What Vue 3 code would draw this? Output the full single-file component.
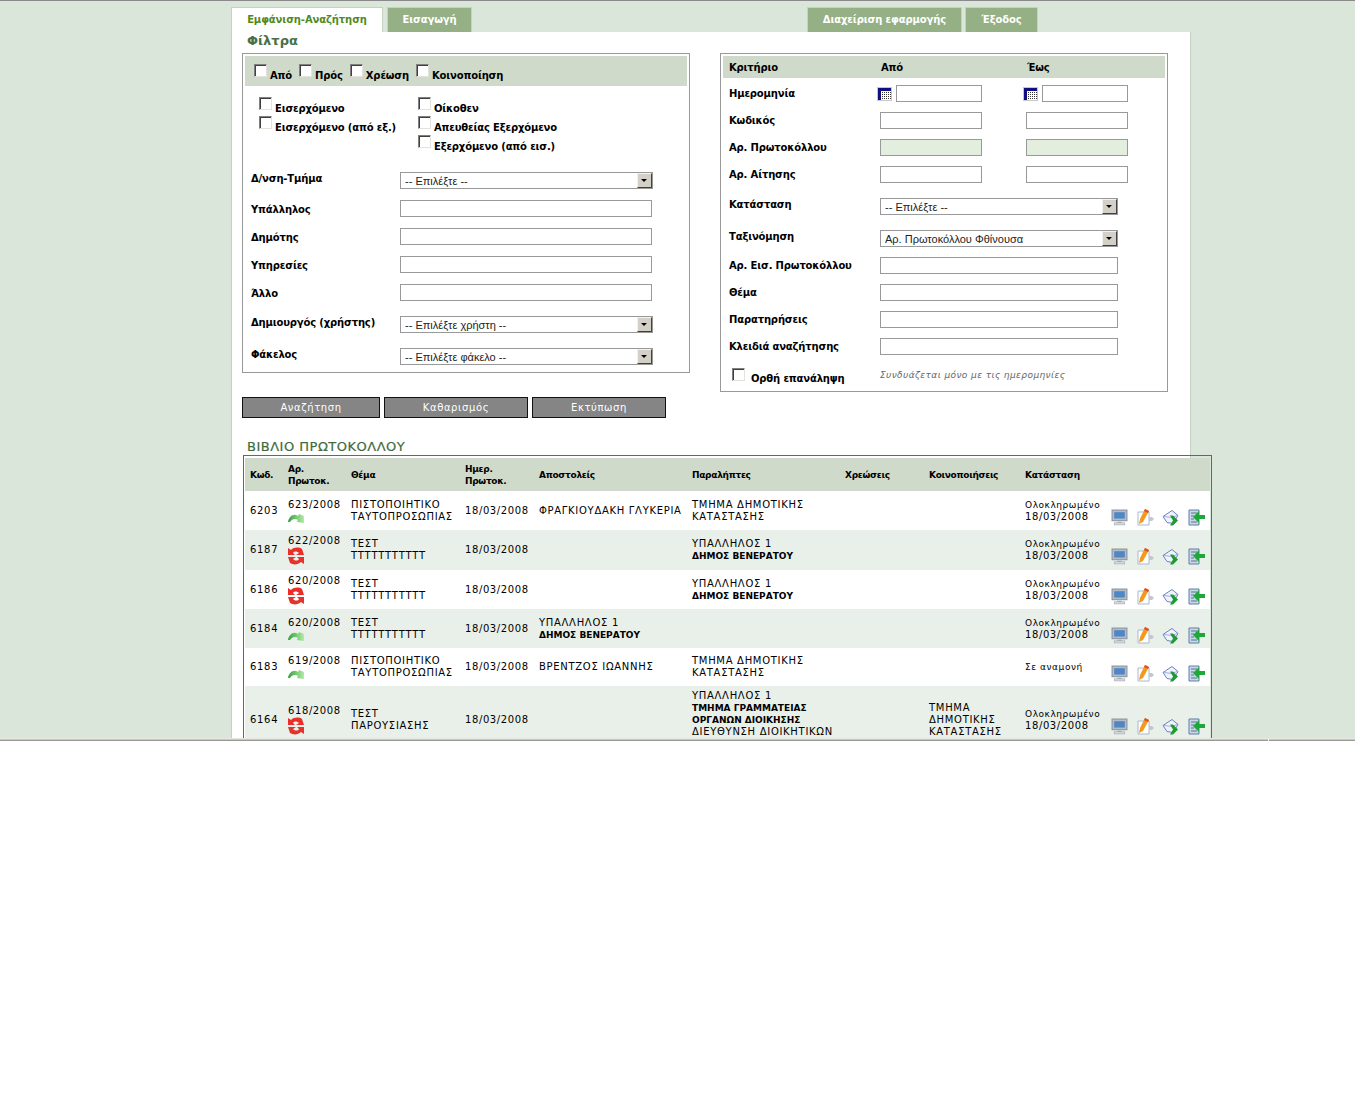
<template>
  <div class="frame">
    <svg class="defs" width="0" height="0" aria-hidden="true">
      <defs>
        <linearGradient id="grn" x1="0" y1="0" x2="1" y2="0">
          <stop offset="0" stop-color="#34a040" />
          <stop offset="1" stop-color="#b4ecA6" />
        </linearGradient>
        <symbol id="i-ok" viewBox="0 0 16 10">
          <path d="M0 9 C1 3 6 0 10 3 L11 1 L16 3 L16 10 L9 9 L10 7 C7 5 4 6 2 9 Z" fill="url(#grn)" />
        </symbol>
        <symbol id="i-sync" viewBox="0 0 16 18">
          <path d="M0 8 L0 1 L3 3 C6 0 11 0 14 2 L16 8 L8 8 L11 6 C9 4 6 4 5 6 L7 8 Z" fill="#ea2f2a" />
          <path d="M16 10 L16 17 L13 15 C10 18 5 18 2 16 L0 10 L8 10 L5 12 C7 14 10 14 11 12 L9 10 Z" fill="#e0342c" />
        </symbol>
        <symbol id="i-screen" viewBox="0 0 16 16">
          <rect x="1" y="1" width="14" height="10" fill="#b4bcc4" stroke="#8a94a0" />
          <rect x="3" y="3" width="10" height="6" fill="#4f86c6" />
          <rect x="6" y="12" width="4" height="1" fill="#99a2aa" />
          <rect x="3" y="13" width="10" height="2" fill="#d5dadf" stroke="#9aa2a8" stroke-width=".5" />
        </symbol>
        <symbol id="i-edit" viewBox="0 0 17 17">
          <path d="M1 3 H12 V16 H1 Z" fill="#fff" stroke="#a9b8d0" />
          <path d="M12 8 h3 l2 2 l-2 2 h-3 Z" fill="#c4c8cc" />
          <path d="M8 0 L12 2 L6 13 L2 15 L3 10 Z" fill="#f29a1d" />
          <path d="M8 0 L12 2 L11 4 L7 2 Z" fill="#d9502a" />
        </symbol>
        <symbol id="i-mail" viewBox="0 0 17 16">
          <path d="M1 7 L10 1 L16 6 L11 14 L5 13 Z" fill="#f0f3fc" stroke="#6c80c4" />
          <path d="M2 7 L10 8 L15 6" fill="none" stroke="#9fb0dc" />
          <path d="M8 6 H11 L16 11 L11 16 H8 L11 11 Z" fill="#1f9a35" />
        </symbol>
        <symbol id="i-doc" viewBox="0 0 17 17">
          <path d="M1 1 H11 V16 H1 Z" fill="#c9d8e8" stroke="#5f7ea8" />
          <path d="M3 4 H9 M3 7 H6 M3 10 H6 M3 13 H9" stroke="#5f738c" />
          <path d="M17 6 H11 V2 L5 8 L11 14 V10 H17 Z" fill="#1ea83c" />
        </symbol>
        <symbol id="i-cal" viewBox="0 0 15 14">
          <rect x="0" y="0" width="15" height="14" fill="#c8c8c8" />
          <rect x="1" y="1" width="13" height="12" fill="#fff" />
          <rect x="1" y="1" width="13" height="3" fill="#101080" />
          <rect x="1" y="1" width="3" height="12" fill="#101080" />
          <path d="M5 5.5 H14 M5 7.5 H14 M5 9.5 H14 M5 11.5 H14" stroke="#333" stroke-dasharray="1 1" />
        </symbol>
      </defs>
    </svg>

    <nav class="tabs">
      <a class="tab active">Εμφάνιση-Αναζήτηση</a>
      <a class="tab second">Εισαγωγή</a>
      <a class="tab admin">Διαχείριση εφαρμογής</a>
      <a class="tab exit">Έξοδος</a>
    </nav>

    <main class="panel">
      <h2 class="title">Φίλτρα</h2>

      <div class="filters">
        <div class="left-col">
          <section class="box left-box">
            <div class="head-checks">
              <label v-for="c in headChecks" :key="c" class="check"><input type="checkbox" /><span>{{ c }}</span></label>
            </div>
            <div class="type-checks">
              <div class="type-col first">
                <label v-for="c in typesA" :key="c" class="check"><input type="checkbox" /><span>{{ c }}</span></label>
              </div>
              <div class="type-col">
                <label v-for="c in typesB" :key="c" class="check"><input type="checkbox" /><span>{{ c }}</span></label>
              </div>
            </div>
            <div v-for="f in leftFields" :key="f.label" class="field" :class="f.cls">
              <span class="lbl" :class="{ up: f.select }">{{ f.label }}</span>
              <div v-if="f.select" class="sel wide">
                <select><option>{{ f.select }}</option></select><i class="arrow"></i>
              </div>
              <input v-else type="text" class="txt wide" />
            </div>
          </section>
          <div class="buttons">
            <button class="btn b1">Αναζήτηση</button>
            <button class="btn b2">Καθαρισμός</button>
            <button class="btn b3">Εκτύπωση</button>
          </div>
        </div>

        <section class="box right-box">
          <div class="crit-head"><span>Κριτήριο</span><span>Από</span><span>Έως</span></div>
          <div class="r-row date">
            <span class="r-lbl">Ημερομηνία</span>
            <div class="pair">
              <div class="cell"><svg class="cal"><use href="#i-cal" /></svg><input type="text" class="txt d" /></div>
              <div class="cell"><svg class="cal"><use href="#i-cal" /></svg><input type="text" class="txt d" /></div>
            </div>
          </div>
          <div v-for="r in pairRows" :key="r.label" class="r-row">
            <span class="r-lbl">{{ r.label }}</span>
            <div class="pair">
              <div class="cell"><input type="text" class="txt s" :class="{ tint: r.tint }" /></div>
              <div class="cell"><input type="text" class="txt s" :class="{ tint: r.tint }" /></div>
            </div>
          </div>
          <div v-for="r in selectRows" :key="r.label" class="r-row sel-row">
            <span class="r-lbl up">{{ r.label }}</span>
            <div class="sel mid"><select><option>{{ r.value }}</option></select><i class="arrow"></i></div>
          </div>
          <div v-for="l in wideRows" :key="l" class="r-row">
            <span class="r-lbl">{{ l }}</span>
            <input type="text" class="txt m" />
          </div>
          <div class="r-row last">
            <label class="check r-lbl"><input type="checkbox" /><span>Ορθή επανάληψη</span></label>
            <em class="hint">Συνδυάζεται μόνο με τις ημερομηνίες</em>
          </div>
        </section>
      </div>

      <h2 class="book">ΒΙΒΛΙΟ ΠΡΩΤΟΚΟΛΛΟΥ</h2>
      <div class="table-box">
        <table>
          <colgroup>
            <col v-for="w in colWidths" :key="w.k" :style="{ width: w.v + 'px' }" />
          </colgroup>
          <thead>
            <tr>
              <th>Κωδ.</th><th>Αρ.<br />Πρωτοκ.</th><th>Θέμα</th><th>Ημερ.<br />Πρωτοκ.</th><th>Αποστολείς</th>
              <th>Παραλήπτες</th><th>Χρεώσεις</th><th>Κοινοποιήσεις</th><th>Κατάσταση</th><th></th>
            </tr>
          </thead>
          <tbody>
            <tr v-for="(r, i) in rows" :key="r.id" :class="{ alt: i % 2 === 1 }" :style="{ height: r.h + 'px' }">
              <td>{{ r.id }}</td>
              <td class="num">{{ r.num }}<svg class="state" :class="r.icon"><use :href="'#i-' + r.icon" /></svg></td>
              <td>{{ r.subject[0] }}<br />{{ r.subject[1] }}</td>
              <td class="num">18/03/2008</td>
              <td><template v-for="(l, j) in r.from" :key="j"><b v-if="l.b">{{ l.t }}</b><template v-else>{{ l.t }}</template><br /></template></td>
              <td><template v-for="(l, j) in r.to" :key="j"><b v-if="l.b">{{ l.t }}</b><template v-else>{{ l.t }}</template><br /></template></td>
              <td></td>
              <td><template v-for="l in r.cc" :key="l">{{ l }}<br /></template></td>
              <td class="status">{{ r.status }}<template v-if="r.date"><br /><span class="num">{{ r.date }}</span></template></td>
              <td class="acts">
                <svg class="act"><use href="#i-screen" /></svg>
                <svg class="act"><use href="#i-edit" /></svg>
                <svg class="act"><use href="#i-mail" /></svg>
                <svg class="act"><use href="#i-doc" /></svg>
              </td>
            </tr>
          </tbody>
        </table>
      </div>
    </main>
  </div>
  <div class="bottom"><i class="notch"></i></div>
</template>

<script setup>
const headChecks = ["Από", "Πρός", "Χρέωση", "Κοινοποίηση"];
const typesA = ["Εισερχόμενο", "Εισερχόμενο (από εξ.)"];
const typesB = ["Οίκοθεν", "Απευθείας Εξερχόμενο", "Εξερχόμενο (από εισ.)"];

const leftFields = [
  { label: "Δ/νση-Τμήμα", select: "-- Επιλέξτε --", cls: "first" },
  { label: "Υπάλληλος" },
  { label: "Δημότης" },
  { label: "Υπηρεσίες" },
  { label: "Άλλο" },
  { label: "Δημιουργός (χρήστης)", select: "-- Επιλέξτε χρήστη --", cls: "gap" },
  { label: "Φάκελος", select: "-- Επιλέξτε φάκελο --", cls: "gap" },
];

const pairRows = [{ label: "Κωδικός" }, { label: "Αρ. Πρωτοκόλλου", tint: true }, { label: "Αρ. Αίτησης" }];
const selectRows = [
  { label: "Κατάσταση", value: "-- Επιλέξτε --" },
  { label: "Ταξινόμηση", value: "Αρ. Πρωτοκόλλου Φθίνουσα" },
];
const wideRows = ["Αρ. Εισ. Πρωτοκόλλου", "Θέμα", "Παρατηρήσεις", "Κλειδιά αναζήτησης"];

const colWidths = [38, 63, 114, 74, 153, 153, 84, 96, 85, 105].map((v, k) => ({ k, v }));

const done = "Ολοκληρωμένο";
const date = "18/03/2008";
const user = [{ t: "ΥΠΑΛΛΗΛΟΣ 1" }, { t: "ΔΗΜΟΣ ΒΕΝΕΡΑΤΟΥ", b: true }];
const dept = [{ t: "ΤΜΗΜΑ ΔΗΜΟΤΙΚΗΣ" }, { t: "ΚΑΤΑΣΤΑΣΗΣ" }];
const tautotita = ["ΠΙΣΤΟΠΟΙΗΤΙΚΟ", "ΤΑΥΤΟΠΡΟΣΩΠΙΑΣ"];
const test = ["ΤΕΣΤ", "ΤΤΤΤΤΤΤΤΤΤΤ"];

const rows = [
  { id: 6203, num: "623/2008", icon: "ok", subject: tautotita, from: [{ t: "ΦΡΑΓΚΙΟΥΔΑΚΗ ΓΛΥΚΕΡΙΑ" }], to: dept, cc: [], status: done, date, h: 39 },
  { id: 6187, num: "622/2008", icon: "sync", subject: test, from: [], to: user, cc: [], status: done, date, h: 40 },
  { id: 6186, num: "620/2008", icon: "sync", subject: test, from: [], to: user, cc: [], status: done, date, h: 39 },
  { id: 6184, num: "620/2008", icon: "ok", subject: test, from: user, to: [], cc: [], status: done, date, h: 39 },
  { id: 6183, num: "619/2008", icon: "ok", subject: tautotita, from: [{ t: "ΒΡΕΝΤΖΟΣ ΙΩΑΝΝΗΣ" }], to: dept, cc: [], status: "Σε αναμονή", h: 38 },
  {
    id: 6164,
    num: "618/2008",
    icon: "sync",
    subject: ["ΤΕΣΤ", "ΠΑΡΟΥΣΙΑΣΗΣ"],
    from: [],
    to: [
      { t: "ΥΠΑΛΛΗΛΟΣ 1" },
      { t: "ΤΜΗΜΑ ΓΡΑΜΜΑΤΕΙΑΣ", b: true },
      { t: "ΟΡΓΑΝΩΝ ΔΙΟΙΚΗΣΗΣ", b: true },
      { t: "ΔΙΕΥΘΥΝΣΗ ΔΙΟΙΚΗΤΙΚΩΝ" },
      { t: "\u00a0" },
    ],
    cc: ["ΤΜΗΜΑ", "ΔΗΜΟΤΙΚΗΣ", "ΚΑΤΑΣΤΑΣΗΣ"],
    status: done,
    date,
    h: 68,
  },
];
</script>

<style>
html,
body {
  background: #fff;
}
</style>

<style scoped>
.frame {
  height: 737px;
  overflow: hidden;
  background: #dae6da;
  border-top: 1px solid #8a8a8a;
  font-family: "DejaVu Sans", Verdana, sans-serif;
  font-size: 10px;
  color: #000;
  box-sizing: content-box;
}

.defs {
  position: absolute;
}

.tabs {
  display: flex;
  height: 25px;
  padding: 6px 0 0 231px;
}

.tab {
  box-sizing: border-box;
  height: 25px;
  line-height: 24px;
  text-align: center;
  font-weight: bold;
  letter-spacing: -0.1px;
  color: #fff;
  background: #94b084;
  border: 1px solid #c6d2c0;
  border-bottom: none;
}

.tab.active {
  width: 152px;
  background: #fff;
  color: #4f8a1f;
}

.tab.second {
  width: 85px;
  margin-left: 4px;
}

.tab.admin {
  width: 155px;
  margin-left: 335px;
}

.tab.exit {
  width: 73px;
  margin-left: 3px;
}

.panel {
  box-sizing: border-box;
  width: 960px;
  height: 720px;
  margin-left: 231px;
  background: #fff;
  border-left: 1px solid #c5d0c5;
  border-right: 1px solid #c5d0c5;
}

.title {
  margin: 0;
  padding: 1px 0 0 15px;
  height: 20px;
  font-size: 13px;
  line-height: 15px;
  font-weight: bold;
  color: #4a6f46;
}

.filters {
  display: flex;
  align-items: flex-start;
  height: 387px;
  padding-left: 10px;
}

.left-col {
  width: 448px;
  margin-right: 30px;
}

.box {
  box-sizing: border-box;
  width: 448px;
  padding: 2px;
  border: 1px solid #999;
  letter-spacing: -0.15px;
}

.left-box {
  height: 320px;
}

.right-box {
  height: 339px;
}

.check {
  display: flex;
  align-items: flex-end;
  font-weight: bold;
}

.check input {
  appearance: none;
  box-sizing: border-box;
  width: 13px;
  height: 13px;
  margin: 0 3px 0 0;
  background: #fff;
  border: 1px solid;
  border-color: #808080 #e4e2dc #e4e2dc #808080;
  box-shadow: inset 1px 1px 0 #404040;
}

.check span {
  transform: translateY(4px);
}

.head-checks {
  display: flex;
  align-items: flex-start;
  height: 30px;
  padding: 8px 0 0 9px;
  box-sizing: border-box;
  gap: 7px;
  background: #cfdaca;
}

.type-checks {
  display: flex;
  height: 86px;
  padding: 11px 0 0 14px;
  box-sizing: border-box;
}

.type-col {
  display: flex;
  flex-direction: column;
  gap: 6px;
}

.type-col.first {
  width: 159px;
}

.field {
  display: flex;
  align-items: center;
  height: 17px;
  margin-top: 11px;
  padding-left: 6px;
}

.field.first {
  margin-top: 0;
}

.field.gap {
  margin-top: 15px;
}

.lbl {
  width: 149px;
  margin-top: 2px;
  font-weight: bold;
}

.lbl.up {
  margin-top: -4px;
}

.txt {
  box-sizing: border-box;
  height: 17px;
  padding: 0 3px;
  background: #fff;
  border: 1px solid #999;
  outline: none;
}

.txt.wide {
  width: 252px;
}

.sel {
  position: relative;
  box-sizing: border-box;
  height: 17px;
  border: 1px solid #999;
  background: #fff;
}

.sel.wide {
  width: 253px;
}

.sel.mid {
  width: 238px;
}

.sel select {
  appearance: none;
  display: block;
  width: 100%;
  height: 15px;
  padding: 0 0 0 4px;
  border: none;
  background: transparent;
  font-family: "Liberation Sans", Arial, sans-serif;
  font-size: 11px;
  color: #222;
}

.arrow {
  position: absolute;
  top: 0;
  right: 0;
  width: 15px;
  height: 15px;
  box-sizing: border-box;
  background: #d4d0c8;
  border: 1px solid;
  border-color: #f4f2ee #404040 #404040 #f4f2ee;
}

.arrow::after {
  content: "";
  position: absolute;
  left: 3px;
  top: 5px;
  border: 3px solid transparent;
  border-top: 3px solid #000;
  border-bottom: none;
}

.buttons {
  display: flex;
  gap: 4px;
  margin-top: 24px;
}

.btn {
  box-sizing: border-box;
  height: 21px;
  padding: 0;
  color: #fff;
  background: #858585;
  border: 1px solid #111;
  font-family: "DejaVu Sans", Verdana, sans-serif;
  font-size: 10px;
  letter-spacing: 0.6px;
}

.b1 {
  width: 138px;
}

.b2 {
  width: 144px;
}

.b3 {
  width: 134px;
}

.crit-head {
  display: grid;
  grid-template-columns: 152px 146px 1fr;
  height: 22px;
  line-height: 24px;
  padding-left: 6px;
  font-weight: bold;
  background: #cfdaca;
}

.r-row {
  display: flex;
  align-items: center;
  height: 17px;
  margin-top: 10px;
  padding-left: 6px;
}

.r-row.date {
  margin-top: 7px;
}

.r-row.sel-row {
  margin-top: 15px;
}

.r-row.last {
  margin-top: 11px;
}

.r-lbl {
  width: 151px;
  flex: none;
  font-weight: bold;
}

.r-lbl.up {
  margin-top: -4px;
}

.r-row.last .r-lbl {
  padding-left: 3px;
  box-sizing: border-box;
}

.r-row.last .check input {
  margin-right: 6px;
}

.r-row.last .check span {
  transform: translateY(3px);
}

.pair {
  display: flex;
}

.cell {
  display: flex;
  justify-content: flex-end;
  width: 102px;
  margin-right: 44px;
}

.cal {
  width: 15px;
  height: 14px;
  margin: 2px 4px 0 0;
  flex: none;
}

.txt.d {
  width: 86px;
}

.txt.s {
  width: 102px;
}

.txt.tint {
  background: #e3eede;
}

.txt.m {
  width: 238px;
}

.hint {
  font-size: 9px;
  color: #666;
  letter-spacing: 0.4px;
}

.book {
  margin: 0 0 0 15px;
  font-size: 13px;
  line-height: 14px;
  font-weight: normal;
  letter-spacing: 0.5px;
  color: #3f6a3c;
  -webkit-text-stroke: 0.2px #3f6a3c;
}

.table-box {
  box-sizing: border-box;
  width: 969px;
  margin: 1px 0 0 11px;
  padding: 2px 1px 0 1px;
  border: 1px solid #666;
  border-bottom: none;
}

table {
  table-layout: fixed;
  width: 965px;
  border-collapse: collapse;
  line-height: 12px;
}

th {
  height: 33px;
  padding: 0 0 0 5px;
  text-align: left;
  font-size: 9px;
  font-weight: bold;
  letter-spacing: -0.3px;
  background: #cfdaca;
}

td {
  padding: 0 0 0 5px;
  vertical-align: middle;
  letter-spacing: 0.7px;
  background: #fff;
  white-space: nowrap;
}

td b {
  font-size: 9px;
  letter-spacing: 0;
}

tr.alt td {
  background: #e9f0e9;
}

td.num,
.num {
  letter-spacing: 0.6px;
}

.state {
  display: block;
}

.state.ok {
  width: 16px;
  height: 10px;
  margin-top: 2px;
}

.state.sync {
  width: 16px;
  height: 18px;
}

td.status {
  font-size: 9px;
  letter-spacing: 0.55px;
}

.status .num {
  font-size: 10px;
  letter-spacing: 0.6px;
}

.acts {
  padding: 16px 0 0 6px;
}

.act {
  width: 17px;
  height: 17px;
  margin-right: 8.5px;
}

.bottom {
  position: relative;
  height: 3px;
  background: #c9c9c2;
  border-top: 1px solid #e8e8e2;
  border-bottom: 1px solid #9a9a94;
  box-sizing: border-box;
}

.notch {
  position: absolute;
  left: 1268px;
  top: 0;
  width: 1px;
  height: 3px;
  background: #fff;
}
</style>
